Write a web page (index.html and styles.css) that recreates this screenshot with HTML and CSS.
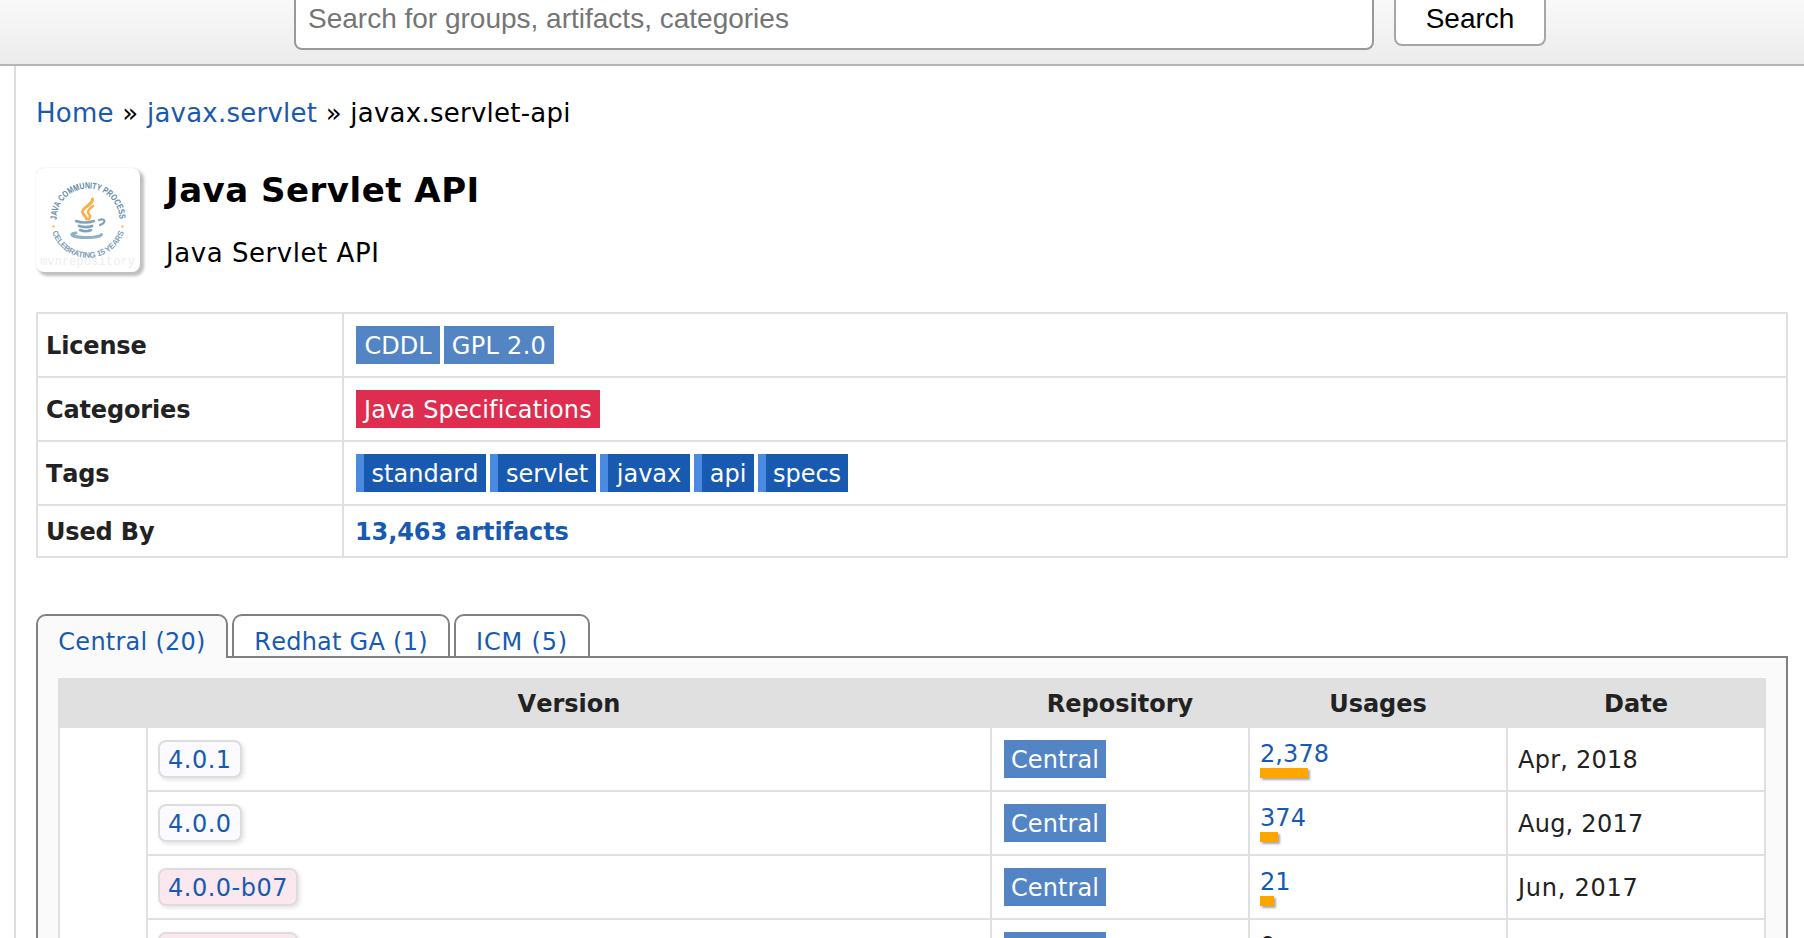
FILE: index.html
```html
<!DOCTYPE html>
<html lang="en">
<head>
<meta charset="utf-8">
<title>Java Servlet API</title>
<link rel="stylesheet" href="styles.css">
</head>
<body>
<header class="topbar">
  <input class="search-input" type="text" placeholder="Search for groups, artifacts, categories">
  <button class="search-button">Search</button>
</header>
<main class="content">
  <nav class="breadcrumb"><a href="#">Home</a> » <a href="#">javax.servlet</a> » javax.servlet-api</nav>
  <section class="intro">
    <div class="logo">
      <svg width="104" height="104" viewBox="0 0 104 104">
        <defs>
          <path id="arc-top" d="M20.500 52 A31.500 31.500 0 0 1 83.500 52"/>
          <path id="arc-bottom" d="M16 64 A38 38 0 0 0 88 64"/>
        </defs>
        <text class="logo-mark" x="4" y="97" textLength="95">mvnrepository</text>
        <text class="logo-ring"><textPath href="#arc-top" textLength="98" lengthAdjust="spacingAndGlyphs">JAVA COMMUNITY PROCESS</textPath></text>
        <text class="logo-ring logo-ring-low"><textPath href="#arc-bottom" textLength="94">CELEBRATING 15 YEARS</textPath></text>
        <circle cx="17.500" cy="58.500" r="1.400" fill="#fbc983"/>
        <circle cx="86.500" cy="58.500" r="1.400" fill="#fbc983"/>
        <g fill="none" stroke-linecap="round">
          <path d="M56.500 31 C57 37 46 39 46.500 44 C47 47 50 48 50.500 51" stroke="#f9b04a" stroke-width="3"/>
          <path d="M57 38 C52 42 50.500 44 53.500 47 C54.500 48.500 54 50 52.500 51.500" stroke="#f9b04a" stroke-width="2.400"/>
          <path d="M40 53 C45 55 53 55 58 53" stroke="#7fa3bd" stroke-width="2.600"/>
          <path d="M63 52 C69 50 71 54 64 57" stroke="#7fa3bd" stroke-width="2.200"/>
          <path d="M43 58 C48 59.500 52 59.500 56 58" stroke="#7fa3bd" stroke-width="2.800"/>
          <path d="M44 62 C48 63.500 52 63.500 55 62" stroke="#7fa3bd" stroke-width="2.600"/>
          <path d="M40 65 C31 66 37 69.500 50 69.500 C58 69.500 65 68 65.500 66.500" stroke="#8fb0c6" stroke-width="2.800"/>
        </g>
      </svg>
    </div>
    <div class="intro-text">
      <h1>Java Servlet API</h1>
      <p>Java Servlet API</p>
    </div>
  </section>

  <table class="facts">
    <tr><th>License</th><td><div class="badges"><span class="badge lic cddl">CDDL</span><span class="badge lic gpl">GPL 2.0</span></div></td></tr>
    <tr><th>Categories</th><td><div class="badges"><a class="badge cat">Java Specifications</a></div></td></tr>
    <tr><th>Tags</th><td><div class="badges"><a class="badge tag w130">standard</a><a class="badge tag w106">servlet</a><a class="badge tag w90">javax</a><a class="badge tag w60">api</a><a class="badge tag w90">specs</a></div></td></tr>
    <tr class="short"><th>Used By</th><td><a class="used" href="#">13,463 artifacts</a></td></tr>
  </table>

  <div class="tabs">
    <a class="tab active t-central" href="#">Central (20)</a>
    <a class="tab t-redhat" href="#">Redhat GA (1)</a>
    <a class="tab t-icm" href="#">ICM (5)</a>
  </div>
  <section class="panel">
    <table class="versions">
      <colgroup><col class="c-group"><col class="c-version"><col class="c-repo"><col class="c-use"><col class="c-date"></colgroup>
      <thead><tr><th></th><th>Version</th><th>Repository</th><th>Usages</th><th>Date</th></tr></thead>
      <tbody>
        <tr><td rowspan="4"></td><td><a class="ver">4.0.1</a></td><td><a class="badge lic central">Central</a></td><td><div class="usage"><a href="#">2,378</a><i class="bar" style="width:48px"></i></div></td><td class="date">Apr, 2018</td></tr>
        <tr><td><a class="ver">4.0.0</a></td><td><a class="badge lic central">Central</a></td><td><div class="usage"><a href="#">374</a><i class="bar" style="width:18px"></i></div></td><td class="date">Aug, 2017</td></tr>
        <tr><td><a class="ver beta">4.0.0-b07</a></td><td><a class="badge lic central">Central</a></td><td><div class="usage"><a href="#">21</a><i class="bar" style="width:14px"></i></div></td><td class="date wide">Jun, 2017</td></tr>
        <tr><td><a class="ver beta"></a></td><td><a class="badge lic central"></a></td><td><div class="usage">0</div></td><td class="date"></td></tr>
      </tbody>
    </table>
  </section>
</main>
</body>
</html>
```
FILE: styles.css
```css
* { box-sizing: border-box; }
html, body { margin: 0; height: 938px; overflow: hidden; }
body {
  display: flex;
  flex-direction: column;
  background: #fff;
  color: #000;
  font-family: Verdana, "DejaVu Sans", sans-serif;
  font-kerning: none;
}
a { color: #185ab0; text-decoration: none; }

.topbar {
  flex: none;
  display: flex;
  align-items: flex-start;
  gap: 20px;
  height: 66px;
  padding-left: 294px;
  border-bottom: 2px solid #b5b5b5;
  background: linear-gradient(#f9f9f9, #ececec);
}
.search-input, .search-button {
  border: 2px solid #999;
  border-top: 0;
  border-radius: 0 0 8px 8px;
  background: #fff;
  font-family: "Liberation Sans", Arial, sans-serif;
  font-size: 28px;
  outline: 0;
}
.search-input { width: 1080px; height: 50px; padding: 0 12px 10px; }
.search-input::placeholder { color: #757575; opacity: 1; }
.search-button { width: 152px; height: 46px; padding: 0 0 6px; border-color: #a6a6a6; color: #000; }

.content {
  flex: 1;
  min-height: 0;
  margin-left: 14px;
  padding: 0 16px 0 20px;
  border-left: 2px solid #ddd;
}
.breadcrumb { padding-top: 28px; font-size: 26px; line-height: 38px; letter-spacing: 0.24px; white-space: nowrap; }
.intro { display: flex; gap: 26px; height: 144px; margin-top: 36px; }
.logo {
  width: 104px;
  height: 104px;
  border-radius: 8px;
  background: #fff;
  box-shadow: 3px 3px 3px 1px #c0c0c0, 0 0 1px #ccc;
}
.logo svg { display: block; }
.logo-ring { font: bold 9px "Liberation Sans", Arial, sans-serif; fill: #5f8aab; }
.logo-ring-low { font-size: 8px; fill: #7d9fb9; }
.logo-mark { font: 12px "Liberation Mono", monospace; fill: #eee; }
h1 { margin: 0; font-size: 34px; line-height: 44px; letter-spacing: 0.5px; white-space: nowrap; }
.intro-text p { margin: 22px 0 0; font-size: 26px; line-height: 38px; letter-spacing: 0.55px; white-space: nowrap; }

table { border-collapse: separate; border-spacing: 0; table-layout: fixed; color: #222; font-size: 24px; }
th, td { padding: 0; }
.facts { width: 1752px; border: 2px solid #e0e0e0; border-bottom: 0; }
.facts th { width: 306px; padding-left: 8px; border-right: 2px solid #e0e0e0; text-align: left; }
.facts th, .facts td { height: 64px; border-bottom: 2px solid #e0e0e0; line-height: 38px; }
.facts th { padding-top: 2px; letter-spacing: -0.15px; }
.facts td { padding-left: 12px; }
.facts .short th, .facts .short td { height: 52px; }
.facts .short td { padding: 2px 0 0 11px; }
.used { font-weight: bold; letter-spacing: -0.1px; }
.badges { display: flex; gap: 4px; }
.badge { display: block; height: 38px; line-height: 40px; color: #fff; white-space: nowrap; text-align: center; }
.lic { background: #5385c5; }
.cddl { width: 84px; }
.gpl { width: 110px; letter-spacing: 0.3px; }
.cat { width: 244px; background: #df2d4f; letter-spacing: 0.15px; }
.tag { border-left: 8px solid #4a8ae0; background: #185ab0; }
.w130 { width: 130px; }
.w106 { width: 106px; }
.w90 { width: 90px; }
.w60 { width: 60px; }

.tabs { display: flex; gap: 4px; height: 42px; margin-top: 56px; }
.tab {
  height: 42px;
  border: 2px solid #808080;
  border-bottom: 0;
  border-radius: 10px 10px 0 0;
  background: #fff;
  font-size: 24px;
  line-height: 52px;
  letter-spacing: 0.25px;
  text-align: center;
  white-space: nowrap;
}
.tab.active { position: relative; height: 44px; background: #fafafa; }
.t-central { width: 192px; }
.t-redhat { width: 218px; }
.t-icm { width: 136px; letter-spacing: 0.8px; }
.panel { width: 1752px; height: 320px; padding: 20px; border: 2px solid #808080; background: #fafafa; }

.versions { width: 1708px; background: #fff; border-left: 2px solid #e0e0e0; }
.c-group { width: 88px; }
.c-version { width: 844px; }
.c-repo, .c-use, .c-date { width: 258px; }
.versions th { height: 50px; padding: 2px 2px 0 0; background: #e0e0e0; line-height: 38px; }
.versions td { height: 64px; padding-left: 12px; border-right: 2px solid #e0e0e0; border-bottom: 2px solid #e0e0e0; }
.versions td:nth-last-child(4), .versions td:nth-last-child(2), .versions td.date { padding-left: 10px; }
.versions td.date { padding-top: 2px; letter-spacing: 0.25px; }
.versions td.wide { letter-spacing: 0.75px; }
.ver {
  display: block;
  width: 84px;
  height: 38px;
  border: 2px solid #ddd;
  border-radius: 8px;
  background: #fafaff;
  box-shadow: 2px 2px 4px #e4e4e4;
  padding-left: 8px;
  line-height: 36px;
  letter-spacing: 0.5px;
}
.ver.beta { width: 140px; background: #fae8ee; }
.central { width: 102px; letter-spacing: 0.1px; }
.usage { display: flex; flex-direction: column; height: 38px; line-height: 28px; letter-spacing: 0.1px; }
.bar { height: 10px; background: #ffa500; box-shadow: 2px 2px 2px #aaa; }
```
